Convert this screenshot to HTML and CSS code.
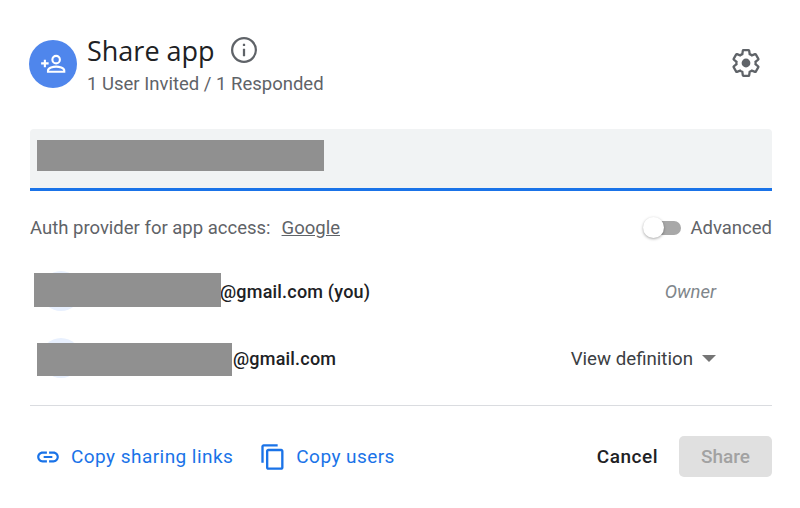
FILE: index.html
```html
<!DOCTYPE html>
<html lang="en">
<head>
    <meta charset="UTF-8">
    <title>Share app</title>
    <link rel="stylesheet" href="styles.css">
</head>
<body>
    <div class="dialog">
        <div class="header">
            <div class="avatar">
                <svg width="30" height="30" viewBox="0 0 24 24" fill="none" stroke="#fff" stroke-width="1.7">
                    <circle cx="14.5" cy="8.5" r="3"/>
                    <path d="M8 18.2v-1.1c0-1.9 4.2-3 6.5-3s6.500 1.100 6.500 3v1.100z"/>
                    <path d="M2.500 11.500h6M5.500 8.500v6"/>
                </svg>
            </div>
            <div class="title-block">
                <div class="title-line">
                    <span class="title">Share app</span>
                    <svg class="info" width="30" height="30" viewBox="0 0 24 24" fill="none" stroke="#5f6368" stroke-width="1.800">
                        <circle cx="12" cy="12" r="9.500"/>
                        <path d="M12 11v6"/>
                        <path d="M12 7v1.800"/>
                    </svg>
                </div>
                <div class="subtitle">1 User Invited / 1 Responded</div>
            </div>
            <svg class="gear" width="32" height="32" viewBox="0 0 24 24" fill="#5f6368">
                <path d="M19.140 12.940c.04-.3.06-.61.060-.94 0-.32-.02-.64-.07-.94l2.030-1.580a.49.490 0 0 0 .12-.61l-1.920-3.320a.488.488 0 0 0-.59-.22l-2.390.96c-.5-.38-1.030-.7-1.620-.94l-.36-2.540a.484.484 0 0 0-.48-.41h-3.840c-.24 0-.43.17-.47.41l-.36 2.540c-.59.24-1.130.57-1.620.94l-2.390-.96c-.22-.08-.47 0-.59.22L2.740 8.870c-.12.210-.08.470.12.610l2.030 1.580c-.05.300-.09.630-.09.940s.02.640.07.940l-2.030 1.580a.49.490 0 0 0-.12.610l1.920 3.320c.12.220.37.290.59.220l2.390-.96c.5.380 1.030.700 1.620.940l.36 2.540c.05.240.24.410.48.410h3.840c.24 0 .44-.17.47-.41l.36-2.540c.59-.24 1.130-.56 1.620-.94l2.390.96c.22.080.47 0 .59-.22l1.920-3.320c.12-.22.070-.47-.12-.61l-2.010-1.580z" fill="none" stroke="#5f6368" stroke-width="1.700"/>
                <circle cx="12" cy="12" r="3.300"/>
            </svg>
        </div>

        <div class="field">
            <div class="redact redact-field"></div>
        </div>

        <div class="auth-row">
            <span>Auth provider for app access:</span>
            <a class="provider">Google</a>
            <div class="toggle">
                <span class="track"></span>
                <span class="knob"></span>
            </div>
            <span class="advanced">Advanced</span>
        </div>

        <div class="user-row first">
            <span class="user-circle"></span>
            <div class="redact redact-one"></div>
            <span class="email">@gmail.com (you)</span>
            <span class="owner">Owner</span>
        </div>

        <div class="user-row second">
            <span class="user-circle"></span>
            <div class="redact redact-two"></div>
            <span class="email">@gmail.com</span>
            <span class="role">View definition <i class="caret"></i></span>
        </div>

        <div class="footer">
            <a class="action link-action">
                <svg width="26" height="26" viewBox="0 0 24 24" fill="#1a73e8">
                    <path d="M17 7h-4v2h4c1.650 0 3 1.350 3 3s-1.350 3-3 3h-4v2h4c2.760 0 5-2.240 5-5s-2.240-5-5-5zm-6 8H7c-1.650 0-3-1.350-3-3s1.350-3 3-3h4V7H7c-2.760 0-5 2.240-5 5s2.240 5 5 5h4v-2zm-3-4h8v2H8z"/>
                </svg>
                Copy sharing links
            </a>
            <a class="action copy-action">
                <svg width="28" height="28" viewBox="0 0 24 24" fill="#1a73e8">
                    <path d="M16 1H4c-1.100 0-2 .9-2 2v14h2V3h12V1zm3 4H8c-1.100 0-2 .9-2 2v14c0 1.100.9 2 2 2h11c1.100 0 2-.9 2-2V7c0-1.100-.9-2-2-2zm0 16H8V7h11v14z"/>
                </svg>
                Copy users
            </a>
            <button class="cancel">Cancel</button>
            <button class="share" disabled>Share</button>
        </div>
    </div>
</body>
</html>
```

FILE: styles.css
```css
body {
    margin: 0;
    background-color: #fff;
    font-family: Roboto, "Liberation Sans", sans-serif;
}
.dialog {
    width: 800px;
    height: 508px;
    box-sizing: border-box;
    padding: 32px 28px 0 30px;
    position: relative;
    overflow: hidden;
}
.header {
    display: flex;
    height: 97px;
}
.avatar {
    width: 48px;
    height: 48px;
    margin: 8px 10px 0 -1px;
    border-radius: 50%;
    background-color: #4f86ec;
    display: flex;
    align-items: center;
    justify-content: center;
}
.title-block {
    flex: 1;
}
.title-line {
    display: flex;
    align-items: center;
    height: 36px;
    gap: 14px;
}
.title {
    font-family: "Open Sans", sans-serif;
    font-size: 27px;
    color: #202124;
}
.subtitle {
    margin-top: 5px;
    font-size: 18.500px;
    color: #5f6368;
}
.gear {
    margin: 15px 10px 0 0;
}
.field {
    height: 62px;
    box-sizing: border-box;
    background-color: #f1f3f4;
    border-bottom: 3px solid #1a73e8;
    border-radius: 4px 4px 0 0;
    position: relative;
}
.redact {
    position: absolute;
    background-color: #909090;
}
.redact-field {
    left: 7px;
    top: 11px;
    width: 287px;
    height: 31px;
}
.auth-row {
    display: flex;
    align-items: center;
    height: 74px;
    font-size: 18.500px;
    color: #5f6368;
}
.provider {
    margin-left: 11px;
    text-decoration: underline;
    flex: 1;
}
.toggle {
    position: relative;
    width: 38px;
    height: 22px;
    margin-right: 9px;
}
.track {
    position: absolute;
    left: 6px;
    top: 4px;
    width: 32px;
    height: 14px;
    border-radius: 7px;
    background-color: #a8a8a8;
}
.knob {
    position: absolute;
    left: 0;
    top: 0;
    width: 21px;
    height: 21px;
    border-radius: 50%;
    background-color: #fff;
    box-shadow: 0 1px 3px rgba(0, 0, 0, 0.35);
}
.user-row {
    display: flex;
    align-items: center;
    position: relative;
    height: 67px;
    font-size: 18px;
    letter-spacing: 0.2px;
    font-weight: 500;
    color: #202124;
}
.user-row.first {
    margin-top: -7px;
}
.user-circle {
    position: absolute;
    left: 11px;
    top: 13px;
    width: 40px;
    height: 40px;
    border-radius: 50%;
    background-color: #e8f0fe;
}
.redact-one {
    left: 4px;
    top: 15px;
    width: 187px;
    height: 34px;
}
.redact-two {
    left: 7px;
    top: 18px;
    width: 195px;
    height: 33px;
}
.first .email {
    margin-left: 190px;
}
.second .email {
    margin-left: 203px;
}
.owner {
    margin-left: auto;
    margin-right: 56px;
    font-size: 18.500px;
    letter-spacing: 0;
    font-weight: 400;
    font-style: italic;
    color: #80868b;
}
.role {
    margin-left: auto;
    margin-right: 56px;
    font-size: 18.700px;
    letter-spacing: 0;
    font-weight: 400;
    color: #3c4043;
    display: flex;
    align-items: center;
    gap: 9px;
}
.caret {
    width: 0;
    height: 0;
    border-left: 7px solid transparent;
    border-right: 7px solid transparent;
    border-top: 7px solid #757575;
}
.footer {
    display: flex;
    align-items: center;
    height: 101px;
    margin-top: 13px;
    border-top: 1px solid #dadce0;
}
.action {
    display: flex;
    align-items: center;
    font-size: 19px;
    color: #1a73e8;
    letter-spacing: 0.450px;
}
.link-action {
    gap: 10px;
    margin-left: 5px;
}
.copy-action {
    gap: 9px;
    margin-left: 26px;
    flex: 1;
}
button {
    font-family: inherit;
    font-size: 19px;
    border: 0;
    background: none;
    padding: 0;
}
.cancel {
    color: #202124;
    margin-right: 21px;
    font-weight: 500;
    letter-spacing: 0.500px;
}
.share {
    width: 93px;
    height: 41px;
    border-radius: 5px;
    background-color: #e0e0e0;
    color: #a2a2a2;
    font-weight: 500;
}
```
